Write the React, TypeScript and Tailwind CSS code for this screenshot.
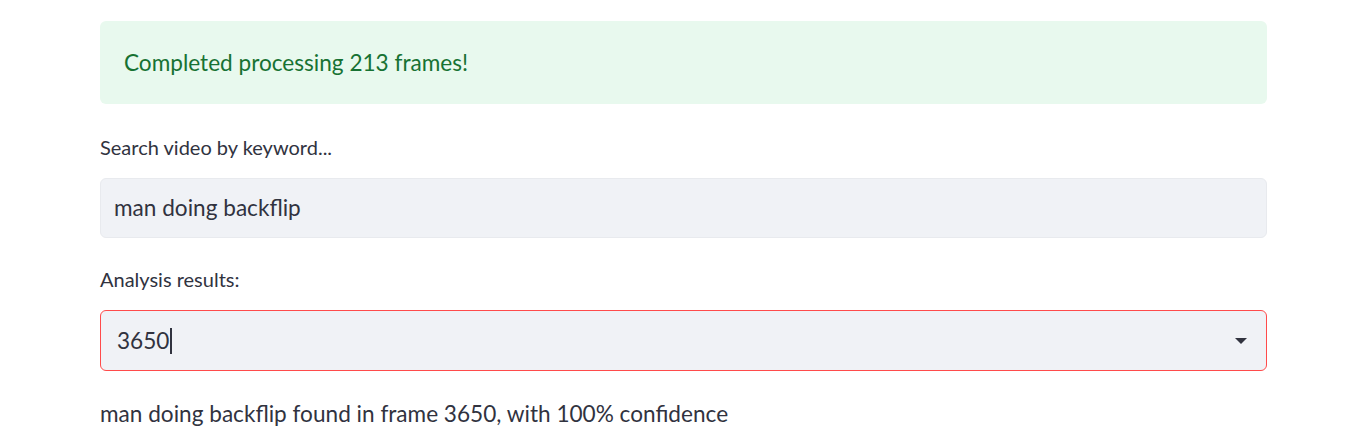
import React from "react";

export default function App() {
  return (
    <div className="w-[1360px] h-[439px] bg-white overflow-hidden" style={{ fontFamily: 'Lato, "Noto Sans", sans-serif' }}>
      <div className="ml-[100px] w-[1167px] pt-[21px] flex flex-col">
        <div className="h-[83px] rounded-[6px] bg-[#e8f9ee] flex items-center px-[24px]">
          <span className="text-[22.6px] text-[#177233]">Completed processing 213 frames!</span>
        </div>
        <div className="mt-[30px] h-[25px] flex items-center text-[20px] text-[#31333f]">Search video by keyword...</div>
        <div className="mt-[19px] h-[60px] rounded-[6px] bg-[#f0f2f6] border border-[#e8eaee] flex items-center px-[13px]">
          <span className="text-[22.6px] text-[#31333f]">man doing backflip</span>
        </div>
        <div className="mt-[28px] h-[25px] flex items-center text-[20px] text-[#31333f]">Analysis results:</div>
        <div className="mt-[19px] h-[61px] rounded-[6px] bg-[#f0f2f6] border border-[#ff4b4b] flex items-center pl-[16px] pr-[18px]">
          <span className="text-[22.6px] text-[#31333f]">3650</span>
          <span className="ml-[1px] w-[2px] h-[26px] bg-[#31333f]" />
          <div className="flex-1" />
          <svg width="14" height="8" viewBox="0 0 14 8"><path d="M1 1h12L7 7z" fill="#31333f" /></svg>
        </div>
        <div className="mt-[28px] h-[30px] flex items-center text-[22.6px] text-[#31333f]">man doing backflip found in frame 3650, with 100% confidence</div>
      </div>
    </div>
  );
}
